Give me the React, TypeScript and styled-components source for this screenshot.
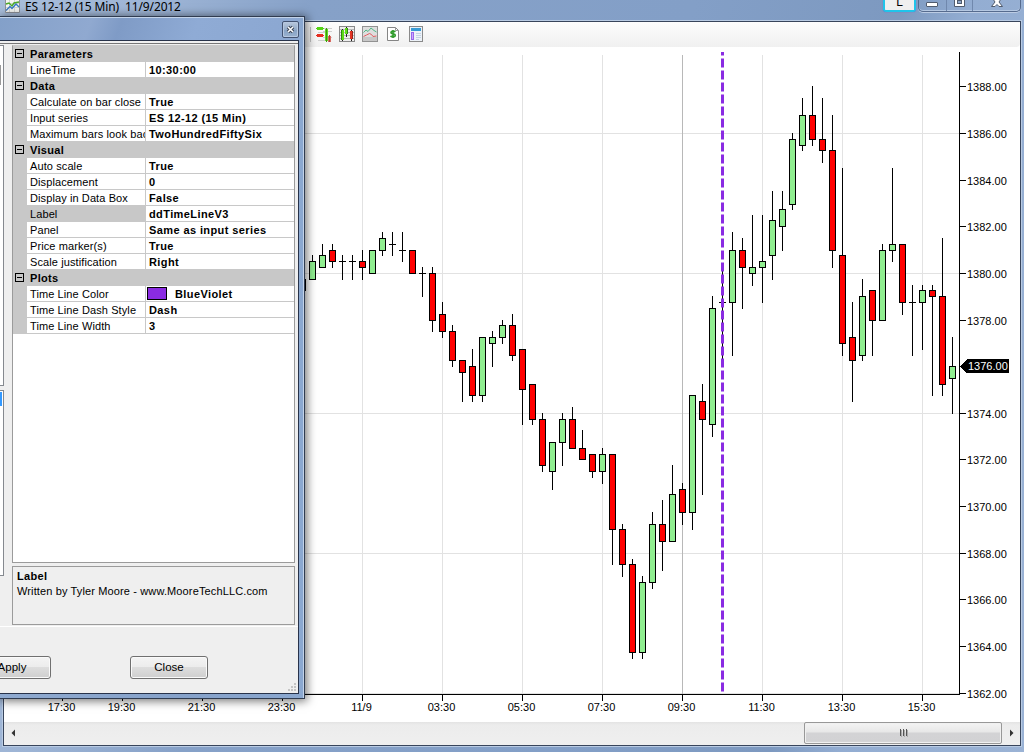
import styled, { createGlobalStyle } from "styled-components";

const GlobalStyle = createGlobalStyle`
  * {
    box-sizing: border-box;
  }

  body {
    margin: 0;
    overflow: hidden;
    font-family: "Liberation Sans", Arial, sans-serif;
    font-size: 11px;
    color: #000;
  }
`;

const Window = styled.div`
  position: relative;
  width: 1024px;
  height: 752px;
  display: flex;
  flex-direction: column;
  padding: 0 3px 6px;
  overflow: hidden;
  background: linear-gradient(100deg, #a9bedb 0%, #9db4d5 14%, #86a1c8 27%, #839fc7 60%, #7d99c0 78%, #93add2 84%, #9bb3d5 100%);
`;

const TitleBar = styled.header`
  flex: none;
  height: 21px;
  display: flex;
  align-items: flex-start;
  justify-content: space-between;
`;

const TitleText = styled.div`
  display: flex;
  align-items: flex-start;
  gap: 5px;
  padding-left: 2px;
  height: 14px;
  font-family: "Noto Sans", "Open Sans", sans-serif;
  font-size: 12px;
  line-height: 14px;
  letter-spacing: -0.13px;
  white-space: pre;
`;

const CaptionArea = styled.div`
  display: flex;
  gap: 2px;
`;

const LinkButton = styled.button`
  width: 33px;
  height: 12px;
  padding: 0;
  border: 2px solid #20c4ea;
  border-top: 0;
  border-radius: 0 0 3px 3px;
  background: #efefef;
  box-shadow: 0 0 1px #7a4cc0;
  font: 12px/5px "Liberation Sans", sans-serif;
  display: flex;
  justify-content: center;
  align-items: flex-start;
`;

const CaptionButtons = styled.div`
  display: flex;
  width: 103px;
  height: 12px;
  border: 1px solid #566b8e;
  border-top: 0;
  border-radius: 0 0 5px 5px;
  box-shadow: 0 1px 0 #bccce4, inset 0 -1px 0 #b5c8e2;
`;

const CaptionButton = styled.div<{ $width: number }>`
  width: ${({ $width }) => $width}px;
  display: flex;
  justify-content: center;
  border-right: 1px solid #7088ad;

  &:last-child {
    border-right: 0;
  }
`;

const Client = styled.main`
  flex: 1;
  min-height: 0;
  display: flex;
  flex-direction: column;
  border: 1px solid #38455c;
  box-shadow: 0 0 0 1px #b9cbe3;
  background: #fff;
`;

const Toolbar = styled.div`
  flex: none;
  height: 25px;
  display: flex;
  align-items: flex-start;
  padding: 4px 0 0 306px;
  background: linear-gradient(#fdfdfd, #f0f0f0);
  border-radius: 0 0 4px 0;
`;

const ToolDivider = styled.span`
  width: 1px;
  height: 15px;
  margin-top: 1px;
  background: #c0c0c0;
`;

const Tools = styled.div`
  display: flex;
  gap: 7px;
  padding-left: 5px;

  svg {
    display: block;
  }
`;

const ScrollBar = styled.div`
  flex: none;
  height: 23px;
  display: flex;
  align-items: flex-start;
  background: linear-gradient(#e3e3e3, #ececec 3px, #efefef);
`;

const ScrollArrow = styled.div`
  width: 18px;
  height: 21px;
  display: flex;
  align-items: center;
  justify-content: center;
`;

const ScrollTrack = styled.div`
  flex: 1;
  display: flex;
  justify-content: flex-end;
`;

const ScrollThumb = styled.div`
  width: 198px;
  height: 22px;
  display: flex;
  align-items: center;
  justify-content: center;
  gap: 2px;
  padding-bottom: 2px;
  border: 1px solid #989898;
  border-radius: 2px;
  background: linear-gradient(#f4f4f4, #e7e7e7 45%, #d3d3d5 50%, #d2d2d4 90%, #dcdcdc);
  box-shadow: inset 0 0 0 1px #f0f0f0;
`;

const Grip = styled.i`
  width: 1px;
  height: 7px;
  background: #555;
  box-shadow: 1px 1px 0 #aaa;
`;

const Dialog = styled.section`
  position: absolute;
  left: 0;
  top: 16px;
  width: 305px;
  height: 683px;
  display: flex;
  flex-direction: column;
  padding: 0 5px 4px 0;
  border: solid #303c50;
  border-width: 1px 1px 1px 0;
  background: linear-gradient(90deg, #8faad0, #86a2ca 60%, #8ba8d0);
  box-shadow: inset -1px 1px 0 #c3d3e9, 1px 1px 9px 1px rgba(0, 0, 0, 0.55);
`;

const DialogCaption = styled.div`
  flex: none;
  height: 22px;
  display: flex;
  justify-content: flex-end;
  align-items: flex-start;
  padding: 3px 0 0;
  margin-top: 1px;
  background: linear-gradient(110deg, #83a0c9 0%, #90a9d0 30%, #7f9bc6 40%, #8fabd5 65%, #8ba7d1 100%);
`;

const DialogClose = styled.button`
  width: 17px;
  height: 17px;
  padding: 0;
  display: flex;
  align-items: center;
  justify-content: center;
  border: 1px solid #435371;
  border-radius: 2px;
  background: linear-gradient(#b9c8dc, #93abc9 50%, #86a1c3 51%, #9ab2d0);
  box-shadow: inset 0 0 0 1px #b7c8e0;
`;

const DialogBody = styled.div`
  flex: 1;
  min-height: 0;
  display: flex;
  flex-direction: column;
  padding-top: 2px;
  border: solid #28334a;
  border-width: 1px 1px 1px 0;
  background: #efefef;
`;

const Panels = styled.div`
  height: 584px;
  display: flex;
  gap: 8px;
  border-bottom: 1px solid #fff;
  border-top: 1px solid #777;
  padding-top: 1px;
`;

const SideLists = styled.div`
  width: 4px;
  display: flex;
  flex-direction: column;
  gap: 4px;
`;

const SideList = styled.div<{ $height: number }>`
  height: ${({ $height }) => $height}px;
  border: solid #85898f;
  border-width: 1px 1px 1px 0;
  background: #fff;
`;

const SideThumb = styled.div`
  width: 1px;
  height: 20px;
  margin-top: 19px;
  background: #999;
`;

const SideSelection = styled.div`
  width: 2px;
  height: 14px;
  margin-top: 1px;
  background: #3399ff;
`;

const GridColumn = styled.div`
  width: 283px;
  display: flex;
  flex-direction: column;
  gap: 3px;
`;

const PropertyGrid = styled.div`
  height: 518px;
  border: 1px solid #9b9b9b;
  border-top-color: #c8c8c8;
  background: #fff;
`;

const Category = styled.div`
  height: 16px;
  display: flex;
  align-items: flex-start;
  gap: 6px;
  padding: 3px 0 0 2px;
  background: #c8c8c8;
  font-weight: bold;
  letter-spacing: 0.33px;
  line-height: 11px;
`;

const Expander = styled.span`
  width: 9px;
  height: 9px;
  display: flex;
  align-items: center;
  justify-content: center;
  border: 1px solid #000;

  &::before {
    content: "";
    width: 5px;
    height: 1px;
    background: #000;
  }
`;

const Row = styled.div`
  height: 16px;
  display: grid;
  grid-template-columns: 14px 119px 1fr;
  line-height: 17px;
  background: #c8c8c8;
`;

const Name = styled.span<{ $selected: boolean }>`
  grid-column: 2;
  height: 15px;
  padding-left: 3px;
  margin-right: 1px;
  overflow: hidden;
  white-space: nowrap;
  letter-spacing: 0.1px;
  background: ${({ $selected }) => ($selected ? "#c8c8c8" : "#fff")};
`;

const Value = styled.span`
  height: 15px;
  display: flex;
  align-items: flex-start;
  padding-left: 3px;
  background: #fff;
  font-weight: bold;
  white-space: nowrap;
  letter-spacing: 0.4px;
`;

const Swatch = styled.i<{ $color: string }>`
  width: 20px;
  height: 13px;
  margin: 1px 8px 0 -2px;
  border: 1px solid #000;
  background: ${({ $color }) => $color};
`;

const Description = styled.div`
  height: 59px;
  padding: 2px 4px;
  border: 1px solid #9b9b9b;
  line-height: 15px;
  letter-spacing: 0.13px;

  strong {
    display: block;
    letter-spacing: 0.35px;
  }
`;

const Actions = styled.div`
  flex: 1;
  display: flex;
  align-items: flex-start;
  gap: 79px;
  padding-top: 29px;
`;

const Button = styled.button<{ $cut?: boolean }>`
  width: 78px;
  margin-left: ${({ $cut }) => ($cut ? -27 : 0)}px;
  height: 23px;
  padding: 0 0 2px;
  border: 1px solid #707070;
  border-radius: 3px;
  background: linear-gradient(#f4f4f4, #ececec 48%, #dddddd 50%, #cfcfcf);
  box-shadow: inset 0 0 0 1px #fafafa;
  font: 11.5px "Liberation Sans", Arial, sans-serif;
  color: #000;
`;

const SizeGrip = styled.svg`
  align-self: flex-end;
  margin-left: auto;
`;

const rows = {
  Parameters: [["LineTime", "10:30:00"]],
  Data: [
    ["Calculate on bar close", "True"],
    ["Input series", "ES 12-12 (15 Min)"],
    ["Maximum bars look back", "TwoHundredFiftySix"],
  ],
  Visual: [
    ["Auto scale", "True"],
    ["Displacement", "0"],
    ["Display in Data Box", "False"],
    ["Label", "ddTimeLineV3"],
    ["Panel", "Same as input series"],
    ["Price marker(s)", "True"],
    ["Scale justification", "Right"],
  ],
  Plots: [
    ["Time Line Color", "BlueViolet"],
    ["Time Line Dash Style", "Dash"],
    ["Time Line Width", "3"],
  ],
};

// wick top, body top, body bottom, wick bottom, kind (g up, r down, d doji)
type Candle = [number, number, number, number, "g" | "r" | "d"];

const candles: Candle[] = [
  [279, 279, 291, 291, "r"],
  [255, 261, 280, 280, "g"],
  [244, 255, 268, 268, "g"],
  [244, 250, 262, 268, "r"],
  [255, 261, 262, 280, "d"],
  [255, 261, 262, 280, "d"],
  [250, 261, 268, 280, "r"],
  [250, 250, 274, 274, "g"],
  [232, 238, 251, 256, "g"],
  [232, 244, 245, 256, "d"],
  [232, 250, 251, 262, "d"],
  [250, 250, 274, 274, "r"],
  [267, 273, 274, 297, "d"],
  [267, 273, 321, 332, "r"],
  [302, 314, 332, 338, "r"],
  [325, 331, 361, 367, "r"],
  [360, 360, 373, 402, "r"],
  [349, 366, 396, 402, "r"],
  [337, 337, 396, 402, "g"],
  [331, 337, 344, 367, "g"],
  [320, 325, 338, 344, "g"],
  [314, 325, 356, 361, "r"],
  [349, 349, 390, 425, "r"],
  [384, 384, 420, 425, "r"],
  [413, 419, 466, 472, "r"],
  [442, 442, 472, 490, "g"],
  [413, 419, 443, 466, "g"],
  [407, 419, 449, 449, "r"],
  [430, 448, 460, 460, "r"],
  [454, 454, 472, 478, "r"],
  [448, 454, 472, 484, "g"],
  [454, 454, 530, 565, "r"],
  [524, 529, 565, 577, "r"],
  [559, 564, 653, 659, "r"],
  [576, 582, 653, 659, "g"],
  [512, 524, 583, 589, "g"],
  [500, 524, 542, 571, "r"],
  [465, 494, 542, 542, "g"],
  [483, 489, 513, 525, "r"],
  [395, 395, 513, 530, "g"],
  [384, 401, 420, 495, "r"],
  [296, 308, 425, 437, "g"],
  [271, 302, 303, 359, "d"],
  [232, 250, 303, 356, "g"],
  [238, 250, 268, 309, "r"],
  [215, 267, 274, 286, "g"],
  [215, 261, 268, 303, "g"],
  [191, 220, 256, 280, "g"],
  [191, 209, 227, 251, "g"],
  [133, 139, 205, 210, "g"],
  [98, 115, 146, 151, "g"],
  [86, 115, 140, 146, "r"],
  [98, 139, 151, 163, "r"],
  [115, 150, 251, 268, "r"],
  [168, 255, 344, 356, "r"],
  [302, 337, 361, 402, "r"],
  [279, 296, 356, 361, "g"],
  [290, 290, 321, 356, "r"],
  [244, 250, 321, 321, "g"],
  [168, 244, 251, 262, "g"],
  [244, 244, 303, 315, "r"],
  [285, 302, 303, 356, "d"],
  [285, 290, 303, 350, "g"],
  [285, 290, 297, 396, "r"],
  [238, 296, 385, 396, "r"],
  [337, 366, 379, 414, "g"],
];

const prices: [string, number][] = [
  ["1388.00", 86],
  ["1386.00", 133],
  ["1384.00", 180],
  ["1382.00", 226],
  ["1380.00", 273],
  ["1378.00", 320],
  ["1374.00", 413],
  ["1372.00", 459],
  ["1370.00", 506],
  ["1368.00", 553],
  ["1366.00", 599],
  ["1364.00", 646],
  ["1362.00", 693],
];

const times: [string, number][] = [
  ["17:30", 62],
  ["19:30", 122],
  ["21:30", 202],
  ["23:30", 282],
  ["11/9", 362],
  ["03:30", 442],
  ["05:30", 522],
  ["07:30", 602],
  ["09:30", 682],
  ["11:30", 762],
  ["13:30", 842],
  ["15:30", 922],
];

const ChartSvg = styled.svg`
  flex: none;
  display: block;
  font-size: 11px;

  rect,
  path.crisp {
    shape-rendering: crispEdges;
  }
`;

const Chart = () => (
  <ChartSvg width="1016" height="675" viewBox="4 47 1016 675">
    {[133, 273, 413, 553, 693].map((y) => (
      <rect key={y} x="4" y={y} width="955" height="1" fill="#e2e2e2" />
    ))}
    {times.map(([label, x]) => (
      <rect key={label} x={x} y="55" width="1" height="639" fill={label === "09:30" ? "#b8b8b8" : "#e2e2e2"} />
    ))}
    {candles.map(([high, top, bottom, low, kind], i) => {
      const x = 302 + i * 10;
      return (
        <g key={i}>
          <rect x={x} y={high} width="1" height={low - high} />
          <rect x={x - 3} y={top} width="7" height={bottom - top} />
          {kind !== "d" && (
            <rect x={x - 2} y={top + 1} width="5" height={bottom - top - 2} fill={kind === "g" ? "#90ee90" : "#ff0000"} />
          )}
        </g>
      );
    })}
    <path d="M722.5 52V58" stroke="#8a2be2" strokeWidth="3" strokeDasharray="3.5 3" />
    <path d="M722.5 58.5V691.5" stroke="#8a2be2" strokeWidth="3" strokeDasharray="9 3" />
    <rect x="4" y="694" width="956" height="1" />
    <rect x="959" y="52" width="1" height="643" />
    {times.map(([label, x]) => (
      <g key={label}>
        <rect x={x} y="694" width="1" height="7" />
        <text x={x - 0.5} y="711" textAnchor="middle">{label}</text>
      </g>
    ))}
    {prices.map(([label, y]) => (
      <g key={label}>
        <rect x="959" y={y} width="7" height="1" />
        <text x="967" y={y + 5}>{label}</text>
      </g>
    ))}
    <path className="crisp" d="M960 366.5L967 359H1009V373H967Z" />
    <text x="968" y="370" fill="#fff">1376.00</text>
  </ChartSvg>
);

const ToolIcons = () => (
  <Tools>
    <svg width="16" height="16" viewBox="0 0 16 16" shapeRendering="crispEdges">
      <path d="M7 2.5H16M7 5.5H16M2 6.5H9M7 11.5H16M2 14.5H10" stroke="#cfcfcf" />
      <path d="M1 1H6L8 2.5L6 4H1L0 3V2Z" fill="#55d316" />
      <path d="M1 8H6L8 9.5L6 11H1L0 10V9Z" fill="#e63023" />
      <path d="M9 3H12V15H9Z" fill="#62dd20" />
      <path d="M10.5 2V16" stroke="#3c9416" />
      <path d="M12 10H15V16H12Z" fill="#d86b62" />
      <path d="M13.5 9V16" stroke="#a8423a" />
    </svg>
    <svg width="16" height="16" viewBox="0 0 16 16" shapeRendering="crispEdges">
      <rect x=".5" y=".5" width="15" height="15" fill="#eee" stroke="#898989" />
      <path d="M1 3.5H15M1 6.5H15M1 9.5H15M1 12.5H15" stroke="#b8b8b8" />
      <path d="M3.5 3V15M7.5 1V11M12.5 4V15" stroke="#222" />
      <path d="M2 4H5V14H2ZM6 2H9V8H6Z" fill="#5ddb18" />
      <path d="M2.5 4V14M8.5 2V8" stroke="#2f8a10" />
      <rect x="11" y="5" width="3" height="8" fill="#e33424" />
      <path d="M13.5 5V13" stroke="#98251b" />
    </svg>
    <svg width="16" height="16" viewBox="0 0 16 16" fill="none">
      <rect x=".5" y=".5" width="15" height="15" fill="#dedede" stroke="#929292" />
      <path d="M1 11H15V15H1Z" fill="#c8c8c8" />
      <path d="M1.5 6.5L4 4L6 5.5L9 2L12 4.5L14.5 6" stroke="#51b887" />
      <path d="M1.5 10.5L4.5 9L7.5 7.5L9.5 8.5L11 10.5L14.5 10" stroke="#e35c60" />
    </svg>
    <svg width="16" height="16" viewBox="0 0 16 16" fill="none">
      <path d="M2.5 1.5H10.5L13.5 4.5V14.5H2.5Z" fill="#fff" stroke="#858585" />
      <path d="M10.5 1.5V4.5H13.5" stroke="#999" />
      <path d="M10.3 6C9 4.6 6 5 6 6.7C6 8.5 10.3 7.3 10.3 9.3C10.3 11.2 7 11.2 5.5 10M8 4V12" stroke="#329c2d" strokeWidth="1.7" />
    </svg>
    <svg width="16" height="16" viewBox="0 0 16 16" shapeRendering="crispEdges">
      <path d="M1.5 .5H14.5V15.5H1.5Z" fill="#edf2f8" stroke="#8a8a8a" />
      <rect x="3" y="2" width="10" height="3" fill="#389bd5" />
      <rect x="3.5" y="6.5" width="2" height="7" fill="#cba9ff" stroke="#9966ec" />
      <path d="M8 7.5H13M8 9.5H13M8 11.5H13M8 13.5H11" stroke="#c3d3e4" />
    </svg>
  </Tools>
);

const PropertiesDialog = () => (
  <Dialog>
    <DialogCaption>
      <DialogClose aria-label="Close dialog">
        <svg width="9" height="9" viewBox="0 0 9 9">
          <path d="M2 2L7 7M7 2L2 7" stroke="#3d4656" strokeWidth="3.4" />
          <path d="M2 2L7 7M7 2L2 7" stroke="#fff" strokeWidth="1.5" />
        </svg>
      </DialogClose>
    </DialogCaption>
    <DialogBody>
      <Panels>
        <SideLists>
          <SideList $height={341}>
            <SideThumb />
          </SideList>
          <SideList $height={186}>
            <SideSelection />
          </SideList>
        </SideLists>
        <GridColumn>
          <PropertyGrid>
            {Object.entries(rows).map(([category, items]) => (
              <div key={category}>
                <Category>
                  <Expander />
                  {category}
                </Category>
                {items.map(([name, value]) => (
                  <Row key={name}>
                    <Name $selected={name === "Label"}>{name}</Name>
                    <Value>
                      {name === "Time Line Color" && <Swatch $color="#8a2be2" />}
                      {value}
                    </Value>
                  </Row>
                ))}
              </div>
            ))}
          </PropertyGrid>
          <Description>
            <strong>Label</strong>
            Written by Tyler Moore - www.MooreTechLLC.com
          </Description>
        </GridColumn>
      </Panels>
      <Actions>
        <Button $cut>Apply</Button>
        <Button>Close</Button>
        <SizeGrip width="10" height="10" viewBox="0 0 10 10" fill="#c4c4c4">
          <path d="M6 0h2v2h-2zM3 3h2v2h-2zM6 3h2v2h-2zM0 6h2v2h-2zM3 6h2v2h-2zM6 6h2v2h-2z" />
        </SizeGrip>
      </Actions>
    </DialogBody>
  </Dialog>
);

const App = () => {
  return (
    <>
      <GlobalStyle />
      <Window>
        <TitleBar>
          <TitleText>
            <svg width="15" height="14" viewBox="0 0 15 14" fill="none">
              <path d="M.5 -1V12.5H14.5V-1" fill="#f5f5f2" stroke="#8f9298" />
              <path d="M1 3.5H14M1 7.5H14M4.5 0V12M9.5 0V12" stroke="#d3d7d5" />
              <path d="M1 4L4 3L7 6L9 3L14 2" stroke="#4cab28" strokeWidth="1.4" />
              <path d="M1 10.5L5 6.5L7 8.5L11 4L14 7" stroke="#3979c4" strokeWidth="1.4" />
            </svg>
            {"ES 12-12 (15 Min)  11/9/2012"}
          </TitleText>
          <CaptionArea>
            <LinkButton>L</LinkButton>
            <CaptionButtons>
              <CaptionButton $width={28}>
                <svg width="13" height="8" viewBox="0 0 13 8">
                  <rect x=".5" y="2.5" width="11" height="4" rx=".5" fill="#fff" stroke="#505b6d" />
                </svg>
              </CaptionButton>
              <CaptionButton $width={27}>
                <svg width="12" height="8" viewBox="0 0 12 8">
                  <path d="M.5 -2V6.5H10.5V-2Z" fill="#fff" stroke="#505b6d" />
                  <rect x="3.5" y=".5" width="4" height="3" fill="#8ca5c8" stroke="#505b6d" />
                </svg>
              </CaptionButton>
              <CaptionButton $width={47}>
                <svg width="12" height="8" viewBox="0 0 12 8">
                  <path d="M.5 6.5L4 2L2 -1H10L8 2L11.5 6.5H8L6 4.5L4 6.5Z" fill="#fff" stroke="#505b6d" />
                </svg>
              </CaptionButton>
            </CaptionButtons>
          </CaptionArea>
        </TitleBar>
        <Client>
          <Toolbar>
            <ToolDivider />
            <ToolIcons />
          </Toolbar>
          <Chart />
          <ScrollBar>
            <ScrollArrow>
              <svg width="5" height="8" viewBox="0 0 5 8">
                <path d="M4 .5V7.5L.5 4Z" fill="#333" />
              </svg>
            </ScrollArrow>
            <ScrollTrack>
              <ScrollThumb>
                <Grip />
                <Grip />
                <Grip />
              </ScrollThumb>
            </ScrollTrack>
            <ScrollArrow>
              <svg width="5" height="8" viewBox="0 0 5 8">
                <path d="M1 .5V7.5L4.5 4Z" fill="#333" />
              </svg>
            </ScrollArrow>
          </ScrollBar>
        </Client>
        <PropertiesDialog />
      </Window>
    </>
  );
};

export default App;
